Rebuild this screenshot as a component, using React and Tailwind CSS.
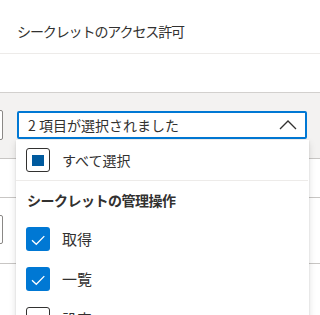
import { useState } from "react";

const groups = [
  {
    title: "シークレットの管理操作",
    items: [
      { id: "get", label: "取得", checked: true },
      { id: "list", label: "一覧", checked: true },
      { id: "set", label: "設定", checked: false },
      { id: "delete", label: "削除", checked: false },
    ],
  },
];

function CheckBox({ state }) {
  if (state === "checked") {
    return (
      <span className="w-[24px] h-[24px] shrink-0 rounded-[3px] bg-[#0078d4] flex items-center justify-center">
        <svg width="24" height="24" viewBox="0 0 24 24" fill="none">
          <path d="M6 13.2l4.3 4.1 8-8.2" stroke="#ffffff" strokeWidth="1.3" />
        </svg>
      </span>
    );
  }
  if (state === "mixed") {
    return (
      <span className="w-[24px] h-[24px] shrink-0 rounded-[3px] border border-[#323130] flex items-center justify-center">
        <span className="w-[12px] h-[11px] bg-[#005a9e]" />
      </span>
    );
  }
  return <span className="w-[24px] h-[24px] shrink-0 rounded-[3px] border border-[#323130]" />;
}

export default function App() {
  const [open] = useState(true);

  return (
    <div className="h-[315px] overflow-hidden bg-white text-[#323130] font-['Noto_Sans_CJK_JP','Noto_Sans',sans-serif]">
      <div className="h-[54px] border-b border-[#edebe9] px-[17px] pt-[21px]">
        <h1 className="text-[14px] leading-[20px] tracking-[-1.1px]">シークレットのアクセス許可</h1>
      </div>

      <div className="h-[39px] border-b border-[#d2d0ce]" />

      <div className="h-[66px] border-b border-[#c8c6c4] bg-[#f3f2f1] pt-[17px] flex gap-[14px]">
        <div className="-ml-[40px] w-[43px] h-[30px] rounded-[2px] border border-[#8a8886] bg-white" />

        <div className="relative mt-[1px] w-[290px] h-[28px]">
          <button className="w-full h-full rounded-[2px] border-2 border-[#0078d4] bg-white pl-[9px] pr-[8px] flex items-center justify-between text-[14px] leading-[20px]">
            <span>2 項目が選択されました</span>
            <svg width="18" height="10" viewBox="0 0 18 10" fill="none">
              <path d="M1 9l8-8 8 8" stroke="#323130" strokeWidth="1.3" />
            </svg>
          </button>

          {open && (
            <div className="absolute z-10 top-[29px] -left-[1px] w-[293px] h-[200px] bg-white shadow-[0_3.2px_7.2px_0_rgba(0,0,0,0.132),0_0.6px_1.8px_0_rgba(0,0,0,0.108)]">
              <div className="h-[40px] px-[10px] flex items-center gap-[12px] text-[14px] leading-[20px]">
                <CheckBox state="mixed" />
                <span>すべて選択</span>
              </div>
              <div className="mx-0 mr-[1px] border-t border-[#edebe9]" />

              {groups.map((group) => (
                <div key={group.title}>
                  <div className="h-[38px] px-[11px] flex items-center text-[14px] leading-[20px] font-bold tracking-[-0.5px]">
                    {group.title}
                  </div>
                  {group.items.map((item) => (
                    <div
                      key={item.id}
                      className="h-[40px] px-[10px] flex items-center gap-[12px] text-[15px] leading-[20px]"
                    >
                      <CheckBox state={item.checked ? "checked" : "empty"} />
                      <span>{item.label}</span>
                    </div>
                  ))}
                </div>
              ))}
            </div>
          )}
        </div>
      </div>

      <div className="h-[39px] border-b border-[#c8c6c4]" />

      <div className="h-[66px] border-b border-[#c8c6c4] pt-[17px]">
        <div className="-ml-[40px] w-[43px] h-[29px] rounded-[2px] border border-[#8a8886]" />
      </div>
    </div>
  );
}
